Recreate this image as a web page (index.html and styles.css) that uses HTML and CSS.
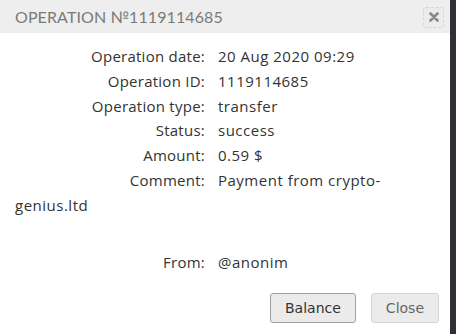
FILE: index.html
```html
<!DOCTYPE html>
<html>
<head>
<meta charset="utf-8">
<link rel="stylesheet" href="styles.css">
</head>
<body>
<div class="page">
  <div class="modal">
    <div class="modal-header">
      <div class="modal-title">OPERATION №1119114685</div>
      <button class="x-btn" aria-label="close">
        <svg width="10" height="10" viewBox="0 0 10 10"><path d="M1.5 1.5 L8.5 8.5 M8.5 1.5 L1.5 8.5" stroke="#888" stroke-width="2.6" stroke-linecap="round"/></svg>
      </button>
    </div>
    <div class="modal-body">
      <div class="row"><span class="label">Operation date:</span><span class="value">20 Aug 2020 09:29</span></div>
      <div class="row"><span class="label">Operation ID:</span><span class="value">1119114685</span></div>
      <div class="row"><span class="label">Operation type:</span><span class="value">transfer</span></div>
      <div class="row"><span class="label">Status:</span><span class="value">success</span></div>
      <div class="row"><span class="label">Amount:</span><span class="value">0.59 $</span></div>
      <div class="row"><span class="label">Comment:</span><span class="value">Payment from crypto-genius.ltd</span></div>
      <div class="row from"><span class="label">From:</span><span class="value">@anonim</span></div>
    </div>
    <div class="modal-footer">
      <button class="btn btn-primary">Balance</button>
      <button class="btn btn-close">Close</button>
    </div>
  </div>
  <div class="backdrop"></div>
</div>
</body>
</html>
```
FILE: styles.css
```css
html, body { margin: 0; padding: 0; }
body { width: 456px; height: 334px; overflow: hidden; background: #2e3236; }
.page { display: flex; height: 334px; }
.modal { width: 450px; background: #fff; display: flex; flex-direction: column; }
.backdrop { flex: 1; background: #2e3236; }
.modal-header {
  height: 33px; background: #eeeeee; display: flex; align-items: center;
  justify-content: space-between; padding: 0 6px 0 15px; box-sizing: border-box;
}
.modal-title {
  font-family: "Lato", sans-serif; font-size: 16px; color: #7a7a7a;
  letter-spacing: 0.1px; font-weight: 400;
}
.x-btn {
  width: 21px; height: 21px; margin-top: 1px; padding: 0; border: 1px dashed #d6d6d6; border-radius: 3px;
  background: #ececec; display: flex; align-items: center; justify-content: center;
}
.modal-body {
  padding: 11px 15px 0 15px; font-family: "Open Sans", sans-serif; font-size: 15px;
  letter-spacing: 0.25px; line-height: 24.8px; color: #333; flex: 1;
}
.label { display: inline-block; width: 190px; text-align: right; margin-right: 13px; }
.value { letter-spacing: 0.5px; }
.from { margin-top: 32px; }
.modal-footer { display: flex; justify-content: flex-end; gap: 15px; padding: 0 11px 11px 0; }
.btn {
  font-family: "DejaVu Sans", sans-serif; font-size: 14px; height: 30px; border-radius: 3px;
  padding: 0 14px; background: #ebebeb;
}
.btn-primary { border: 1px solid #a0a0a0; color: #333; }
.btn-close { border: 1px solid #d4d4d4; color: #666; }
```
